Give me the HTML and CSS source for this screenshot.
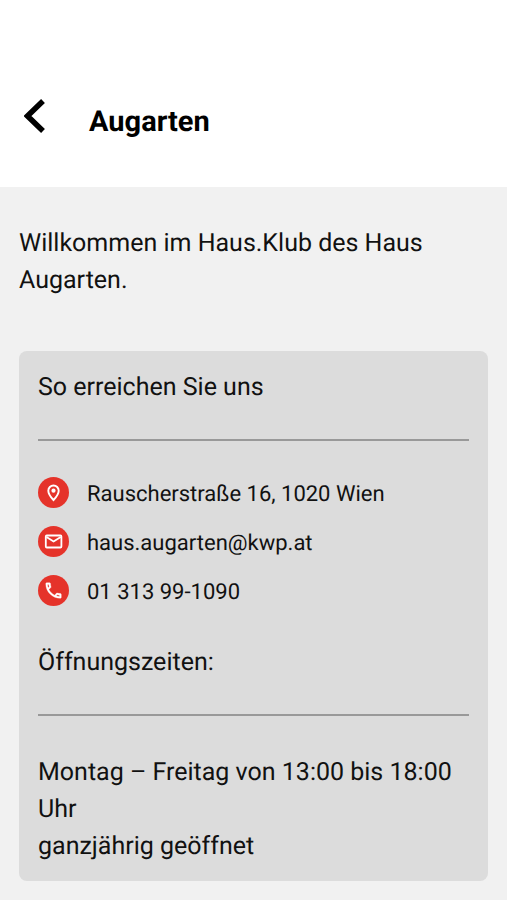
FILE: index.html
```html
<!DOCTYPE html>
<html lang="de">
<head>
<meta charset="utf-8">
<meta name="viewport" content="width=device-width, initial-scale=1">
<title>Augarten</title>
<link rel="stylesheet" href="styles.css">
</head>
<body>
<header class="topbar">
  <button class="back" type="button" aria-label="Zurück">
    <svg viewBox="0 0 22 34" width="22" height="34" aria-hidden="true"><path d="M19 2 3.500 17 19 32" fill="none" stroke="#000" stroke-width="5.500"/></svg>
  </button>
  <h1 class="title">Augarten</h1>
</header>
<main class="content">
  <p class="intro">Willkommen im Haus.Klub des Haus Augarten.</p>
  <section class="card">
    <h2 class="heading">So erreichen Sie uns</h2>
    <hr class="rule">
    <ul class="contacts">
      <li class="contact">
        <svg class="icon" viewBox="0 0 31 31" aria-hidden="true"><circle cx="15.500" cy="15.500" r="15.500" fill="#e5332a"/><path d="M15.500 8.500a5.200 5.200 0 0 0-5.200 5.200c0 3.800 5.200 9.300 5.200 9.300s5.200-5.500 5.200-9.300a5.200 5.200 0 0 0-5.200-5.200z" fill="none" stroke="#fff" stroke-width="1.900"/><circle cx="15.500" cy="13.700" r="2.100" fill="#fff"/></svg>
        <span>Rauscherstraße 16, 1020 Wien</span>
      </li>
      <li class="contact">
        <svg class="icon" viewBox="0 0 31 31" aria-hidden="true"><circle cx="15.500" cy="15.500" r="15.500" fill="#e5332a"/><rect x="7.800" y="9.500" width="15.600" height="12" rx="1" fill="none" stroke="#fff" stroke-width="1.800"/><path d="m8.500 11 7.100 4.500 7.100-4.500" fill="none" stroke="#fff" stroke-width="1.900"/></svg>
        <a class="link" href="mailto:haus.augarten@kwp.at">haus.augarten@kwp.at</a>
      </li>
      <li class="contact">
        <svg class="icon" viewBox="0 0 31 31" aria-hidden="true"><circle cx="15.500" cy="15.500" r="15.500" fill="#e5332a"/><path transform="translate(5.200 5.200) scale(.86)" d="M6.540 5c.06.890.21 1.760.45 2.590l-1.200 1.200c-.41-1.200-.67-2.470-.76-3.790h1.510m9.860 12.020c.85.240 1.720.390 2.600.450v1.490c-1.320-.090-2.590-.350-3.800-.750l1.200-1.190M7.500 3H4c-.55 0-1 .450-1 1 0 9.390 7.610 17 17 17 .550 0 1-.450 1-1v-3.490c0-.550-.450-1-1-1-1.240 0-2.450-.200-3.570-.570-.350-.120-.750-.030-1.020.240l-2.200 2.200c-2.830-1.450-5.150-3.760-6.590-6.590l2.200-2.200c.280-.280.360-.670.250-1.020C8.700 6.450 8.500 5.250 8.500 4c0-.550-.450-1-1-1z" fill="#fff" stroke="#fff" stroke-width=".4"/></svg>
        <a class="link" href="tel:+431313991090">01 313 99-1090</a>
      </li>
    </ul>
    <h2 class="heading">Öffnungszeiten:</h2>
    <hr class="rule">
    <p class="hours">Montag – Freitag von 13:00 bis 18:00 Uhr<br>ganzjährig geöffnet</p>
  </section>
</main>
</body>
</html>
```
FILE: styles.css
```css
* { box-sizing: border-box; }
body {
  margin: 0;
  min-height: 100vh;
  background: #f1f1f1;
  color: #111;
  font: 25px/37px Roboto, sans-serif;
  text-rendering: geometricPrecision;
}
h1, h2, p, ul { margin: 0; padding: 0; font-size: inherit; font-weight: 400; }
.topbar {
  display: flex;
  align-items: center;
  gap: 43px;
  padding: 99px 24px 44px;
  background: #fff;
}
.back { display: flex; padding: 0 0 10px; border: 0; background: none; }
.topbar .title { padding-top: 2px; color: #000; font-size: 29px; font-weight: 700; line-height: 40px; }
.content { padding: 38px 19px 19px; }
.intro { margin-bottom: 52px; }
.card { padding: 18px 19px 16px; border-radius: 8px; background: #dcdcdc; }
.rule { height: 2px; margin: 33px 0; border: 0; background: #999; }
.contacts {
  display: flex;
  flex-direction: column;
  gap: 13px;
  margin: 36px 0 33px;
  list-style: none;
  font-size: 22px;
  line-height: 36px;
}
.contact { display: flex; align-items: flex-start; gap: 18px; }
.icon { flex: none; width: 31px; height: 31px; }
.link { color: inherit; text-decoration: none; }
.hours { margin-top: 38px; }
```
